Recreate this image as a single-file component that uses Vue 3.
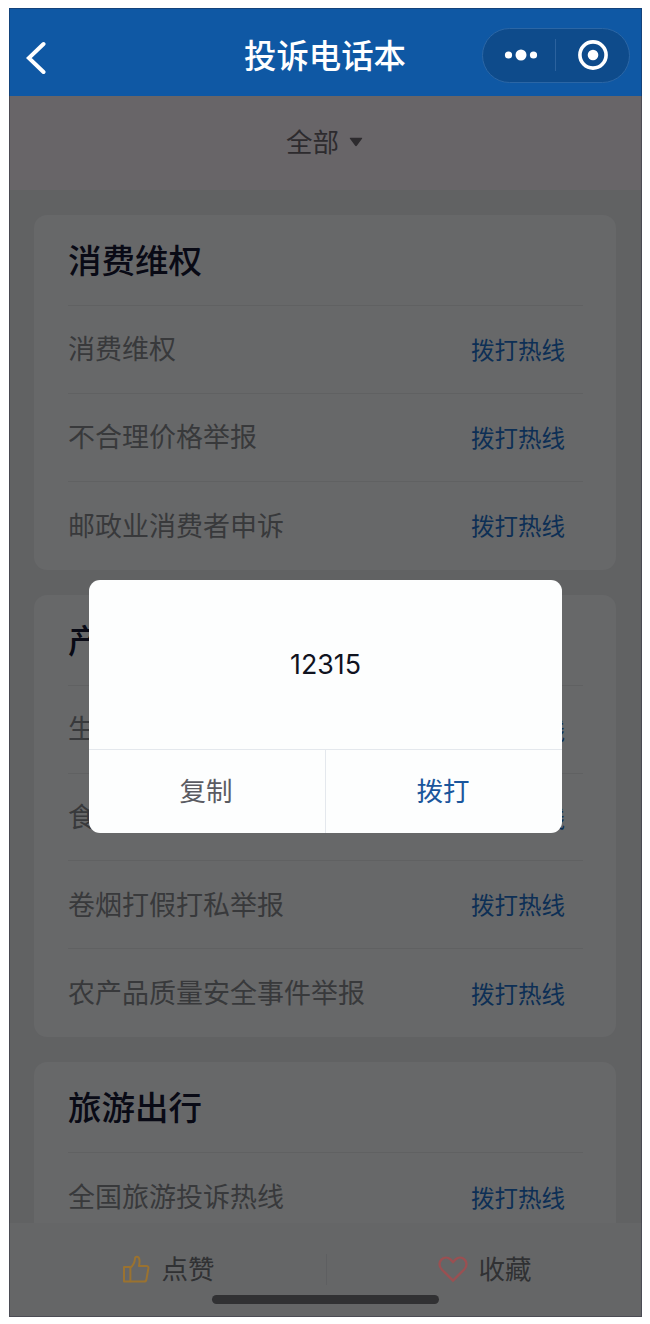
<template>
  <div class="screen">
    <header class="navbar">
      <button class="back-btn" aria-label="返回">
        <svg width="22" height="36" viewBox="0 0 22 36" fill="none">
          <path d="M17.5 4L2.8 18L17.5 32" stroke="currentColor" stroke-width="4" stroke-linecap="round" stroke-linejoin="miter"/>
        </svg>
      </button>
      <h1 class="nav-title">投诉电话本</h1>
      <div class="capsule">
        <svg class="capsule-dots" width="34" height="14" viewBox="0 0 34 14" fill="currentColor">
          <circle cx="4.5" cy="7" r="3.6"/>
          <circle cx="17" cy="7" r="5.5"/>
          <circle cx="29.5" cy="7" r="3.6"/>
        </svg>
        <span class="capsule-line"></span>
        <svg class="capsule-target" width="32" height="32" viewBox="0 0 32 32" fill="none">
          <circle cx="16" cy="16" r="13.1" stroke="currentColor" stroke-width="3.6"/>
          <circle cx="16" cy="16" r="5.3" fill="currentColor"/>
        </svg>
      </div>
    </header>

    <div class="filter">
      <span>全部</span>
      <svg width="14" height="10" viewBox="0 0 14 10">
        <path d="M1.4 .8H12.6Q13.8 .8 13 1.8L8 8.6Q7 9.8 6 8.6L1 1.8Q.2 .8 1.4 .8Z" fill="currentColor"/>
      </svg>
    </div>

    <main class="content">
      <section v-for="group in groups" :key="group.title" class="card">
        <h2 class="card-title">{{ group.title }}</h2>
        <div v-for="item in group.items" :key="item" class="row">
          <span class="row-name">{{ item }}</span>
          <a class="row-link">拨打热线</a>
        </div>
      </section>
    </main>

    <footer class="footer">
      <div class="actions">
        <button class="action like">
          <svg width="28" height="28" viewBox="0 0 28 28" fill="none" stroke="currentColor" stroke-width="2" stroke-linejoin="round">
            <path d="M2 12H8.4V26.5H2Z"/>
            <path d="M8.4 12.5C11.4 10.3 12.6 7.8 12.9 4.1C13.1 .9 16.8 .9 17.4 4.5C17.8 6.9 17.5 8.8 16.9 11H24.4C25.8 11 26.6 11.9 26.4 13.2L24.4 24.5C24.2 25.8 23.4 26.5 22.2 26.5H8.4"/>
          </svg>
          <span>点赞</span>
        </button>
        <span class="action-line"></span>
        <button class="action collect">
          <svg width="32" height="28" viewBox="0 0 32 28" fill="none" stroke="currentColor" stroke-width="2.4" stroke-linejoin="miter">
            <path d="M16 25.6L4.8 14.5C1.8 11.4 1.8 7.1 4.4 4.6C7.2 1.9 10.9 2 13.4 4.4L16 7L18.6 4.4C21.1 2 24.8 1.9 27.6 4.6C30.2 7.1 30.2 11.4 27.2 14.5Z"/>
          </svg>
          <span>收藏</span>
        </button>
      </div>
      <span class="home-bar"></span>
    </footer>

    <div class="dialog">
      <div class="dialog-body">{{ phone }}</div>
      <div class="dialog-btns">
        <button class="dialog-btn">复制</button>
        <button class="dialog-btn primary">拨打</button>
      </div>
    </div>
  </div>
</template>

<script setup>
import { ref } from 'vue'

const phone = ref('12315')

const groups = ref([
  {
    title: '消费维权',
    items: ['消费维权', '不合理价格举报', '邮政业消费者申诉']
  },
  {
    title: '产品质量',
    items: ['生产安全举报', '食品安全举报', '卷烟打假打私举报', '农产品质量安全事件举报']
  },
  {
    title: '旅游出行',
    items: ['全国旅游投诉热线']
  }
])
</script>

<style>
body {
  background: #fff;
}
</style>

<style scoped>
.screen {
  position: relative;
  box-sizing: border-box;
  width: 633px;
  height: 1309px;
  margin: 8px 0 7px 8.5px;
  display: flex;
  flex-direction: column;
  overflow: hidden;
  background: #616263;
  font-family: 'Noto Sans CJK SC', sans-serif;
}

/* thin dark edge around the whole screen */
.screen::after {
  content: '';
  position: absolute;
  inset: 0;
  border: 1px solid rgba(30, 30, 50, 0.35);
  pointer-events: none;
}

button {
  padding: 0;
  border: none;
  background: none;
  font-family: inherit;
}

/* Nav bar */
.navbar {
  flex: none;
  height: 88px;
  display: grid;
  grid-template-columns: 1fr auto 1fr;
  align-items: center;
  background: #0f58a4;
  color: #fff;
}

.back-btn {
  display: flex;
  margin: 11px 0 0 17px;
  color: #fff;
}

.nav-title {
  margin: 0;
  padding-top: 4px;
  font-size: 32.4px;
  line-height: 48px;
  font-weight: 500;
}

.capsule {
  box-sizing: border-box;
  justify-self: end;
  display: flex;
  align-items: center;
  width: 148px;
  height: 55px;
  margin: 6px 11.5px 0 0;
  padding: 0 19px 0 21px;
  border: 1px solid #2b66a5;
  border-radius: 28px;
  background: #0e4b8b;
}

.capsule-line {
  width: 1px;
  height: 32px;
  margin: 0 21px 0 17px;
  background: #2b629e;
}

/* Filter */
.filter {
  flex: none;
  height: 94px;
  display: flex;
  align-items: center;
  justify-content: center;
  gap: 10px;
  padding: 0 1px 3px 0;
  box-sizing: border-box;
  background: #686568;
  color: #2d2b2e;
  font-size: 26.5px;
}

.filter span {
  margin-top: -3px;
}

/* Cards */
.content {
  flex: 1;
  min-height: 0;
  overflow: hidden;
  padding: 25px 25.5px 0;
}

.card {
  box-sizing: border-box;
  margin-bottom: 25px;
  padding: 0 33px 0 34px;
  border-radius: 13px;
  background: #676869;
}

.card-title {
  box-sizing: border-box;
  height: 91px;
  margin: 0;
  border-bottom: 1px solid #606162;
  font-size: 33.5px;
  line-height: 88px;
  font-weight: 500;
  color: #090a15;
}

.row {
  box-sizing: border-box;
  height: 87.9px;
  display: flex;
  align-items: center;
  justify-content: space-between;
  padding: 0 18px 2px 0;
  border-bottom: 1px solid #606162;
}

.row:last-child {
  border-bottom: none;
}

.row-name {
  font-size: 27px;
  line-height: 38px;
  color: #38393b;
}

.row-link {
  font-size: 23.5px;
  line-height: 34px;
  padding-top: 1px;
  color: #0d2f55;
}

/* Footer */
.footer {
  flex: none;
  height: 94px;
  display: flex;
  flex-direction: column;
  align-items: center;
  background: #656667;
}

.actions {
  width: 100%;
  height: 73px;
  display: flex;
  align-items: center;
  padding-top: 19px;
  box-sizing: border-box;
}

.action {
  flex: 1;
  display: flex;
  align-items: center;
  justify-content: center;
  gap: 12px;
  font-size: 26.5px;
  line-height: 30px;
}

.action span {
  margin-top: -3px;
  color: #303133;
}

.like {
  padding-left: 2px;
  color: #9a7230;
}

.collect {
  gap: 10px;
  color: #9a5052;
}

.action-line {
  width: 1px;
  height: 31px;
  background: #5e5f61;
}

.home-bar {
  width: 227px;
  height: 9px;
  margin-top: -1px;
  border-radius: 5px;
  background: #313133;
}

/* Dialog */
.dialog {
  position: absolute;
  top: 572px;
  left: 80.5px;
  width: 473px;
  height: 253px;
  display: flex;
  flex-direction: column;
  overflow: hidden;
  border-radius: 11px;
  background: #fdfefe;
}

.dialog-body {
  flex: 1;
  display: flex;
  align-items: center;
  justify-content: center;
  padding-bottom: 1px;
  font-family: Inter, sans-serif;
  font-size: 26.8px;
  color: #10131f;
}

.dialog-btns {
  height: 83px;
  display: flex;
  border-top: 1px solid #e4e8ed;
}

.dialog-btn {
  flex: 1;
  padding: 0 2px 3px 0;
  font-size: 26.5px;
  line-height: 36px;
  color: #5a5b62;
}

.dialog-btn.primary {
  border-left: 1px solid #e4e8ed;
  color: #1a569c;
}
</style>
